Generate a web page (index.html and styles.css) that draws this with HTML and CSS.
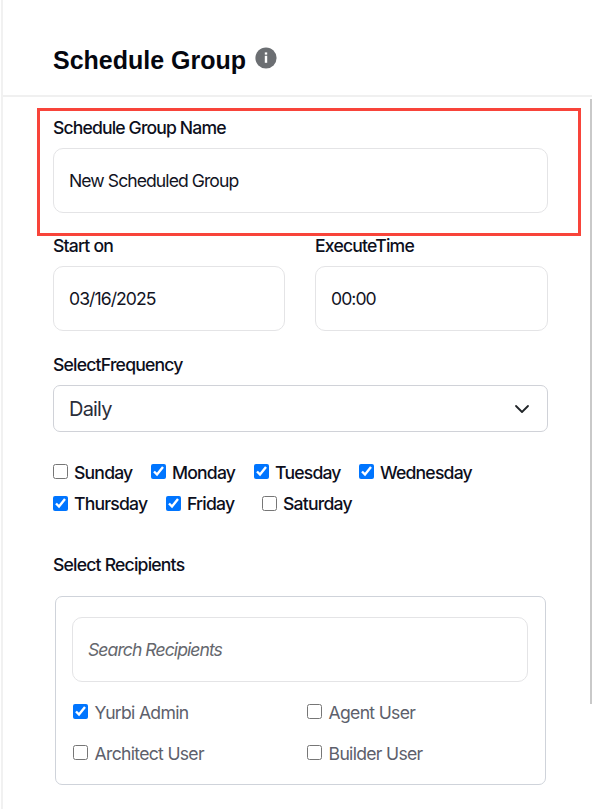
FILE: index.html
```html
<!DOCTYPE html>
<html lang="en">
<head>
  <meta charset="UTF-8">
  <title>Schedule Group</title>
  <link rel="stylesheet" href="styles.css">
</head>
<body>
  <div class="panel">
    <header class="panel-header">
      <h1>Schedule Group</h1>
      <svg class="info-icon" viewBox="0 0 22 22">
        <circle cx="11" cy="11" r="10.6" fill="#6b6e72"/>
        <rect x="9.8" y="5.4" width="2.4" height="2.2" fill="#fff"/>
        <rect x="9.8" y="8.8" width="2.4" height="7" fill="#fff"/>
      </svg>
    </header>

    <form class="panel-body">
      <div class="field name-field">
        <label for="groupName">Schedule Group Name</label>
        <input class="text-input" id="groupName" type="text" value="New Scheduled Group">
        <div class="highlight"></div>
      </div>

      <div class="field-row">
        <div class="field">
          <label for="startOn">Start on</label>
          <input class="text-input" id="startOn" type="text" value="03/16/2025">
        </div>
        <div class="field">
          <label for="executeTime">ExecuteTime</label>
          <input class="text-input" id="executeTime" type="text" value="00:00">
        </div>
      </div>

      <div class="field frequency-field">
        <label>SelectFrequency</label>
        <div class="select">
          <span>Daily</span>
          <svg class="chevron" viewBox="0 0 16 16">
            <path d="M2 5l6 6 6-6" fill="none" stroke="#212529" stroke-width="1.8" stroke-linecap="round" stroke-linejoin="round"/>
          </svg>
        </div>
      </div>

      <div class="days">
        <div class="day-row">
          <label class="check sunday"><input type="checkbox"><span>Sunday</span></label>
          <label class="check monday"><input type="checkbox" checked><span>Monday</span></label>
          <label class="check tuesday"><input type="checkbox" checked><span>Tuesday</span></label>
          <label class="check"><input type="checkbox" checked><span>Wednesday</span></label>
        </div>
        <div class="day-row">
          <label class="check thursday"><input type="checkbox" checked><span>Thursday</span></label>
          <label class="check friday"><input type="checkbox" checked><span>Friday</span></label>
          <label class="check"><input type="checkbox"><span>Saturday</span></label>
        </div>
      </div>

      <div class="field">
        <label for="search">Select Recipients</label>
        <div class="recipients">
          <input class="text-input search" id="search" type="text" placeholder="Search Recipients">
          <div class="recipient-list">
            <label class="check"><input type="checkbox" checked><span>Yurbi Admin</span></label>
            <label class="check"><input type="checkbox"><span>Agent User</span></label>
            <label class="check"><input type="checkbox"><span>Architect User</span></label>
            <label class="check"><input type="checkbox"><span>Builder User</span></label>
          </div>
        </div>
      </div>
      <div class="scroll-thumb"></div>
    </form>
  </div>
</body>
</html>
```

FILE: styles.css
```css
* {
  box-sizing: border-box;
}
body {
  margin: 0;
  background: #fff;
  color: #0d0f1c;
  font-family: Inter, "Liberation Sans", sans-serif;
  font-size: 17.6px;
  letter-spacing: -0.8px;
}
.panel {
  height: 809px;
  margin-left: 1px;
  border-left: 2px solid #f1f1f1;
  overflow: hidden;
}
.panel-header {
  display: flex;
  align-items: flex-start;
  height: 97px;
  padding: 45px 0 0 50px;
  border-bottom: 2px solid #f0f0f0;
}
h1 {
  margin: 0;
  color: #05070f;
  font: bold 25px/30px "Liberation Sans", sans-serif;
  letter-spacing: 0;
}
.info-icon {
  width: 22px;
  height: 22px;
  margin: 2px 0 0 9px;
}
.panel-body {
  position: relative;
  height: 712px;
  padding: 20px 44px 0 50px;
}
.field > label {
  display: block;
  height: 22px;
  line-height: 22px;
  font-weight: 500;
}
.name-field {
  position: relative;
  margin-bottom: 22px;
}
.name-field > label {
  letter-spacing: -0.86px;
}
.text-input {
  display: block;
  width: 100%;
  height: 65px;
  margin-top: 9px;
  padding: 0 15px;
  border: 1px solid #e4e4e6;
  border-radius: 10px;
  background: #fff;
  color: #12141f;
  font: inherit;
  letter-spacing: -0.94px;
}
/* red callout around the group name */
.highlight {
  position: absolute;
  top: -9px;
  left: -16px;
  width: 544px;
  height: 128px;
  border: 3px solid #f8443a;
}
.field-row {
  display: grid;
  grid-template-columns: 232px 233px;
  gap: 30px;
}
.frequency-field {
  margin-top: 23px;
}
.select {
  display: flex;
  align-items: center;
  justify-content: space-between;
  height: 47px;
  margin-top: 9px;
  padding: 0 17px 0 15px;
  border: 1px solid #d0d2d8;
  border-radius: 7px;
  color: #2b2e3a;
  font-size: 20px;
}
.chevron {
  width: 16px;
  height: 16px;
}
.days {
  margin: 25px 0 35px;
  font-weight: 500;
}
.day-row {
  display: flex;
  height: 31px;
}
.check {
  display: flex;
  align-items: center;
  height: 31px;
}
.check input {
  width: 15px;
  height: 15px;
  margin: 0 6px 2px 0;
}
.day-row + .day-row input {
  margin-bottom: 0;
}
.sunday {
  width: 98px;
}
.monday {
  width: 103px;
}
.tuesday {
  width: 105px;
}
.thursday {
  width: 113px;
}
.friday {
  width: 96px;
}
.recipients {
  height: 189px;
  margin: 20px 2px 0;
  padding: 20px 17px 0 16px;
  border: 1px solid #cfd3da;
  border-radius: 7px;
}
.search {
  margin-top: 0;
}
.search::placeholder {
  color: #65676d;
  font-style: italic;
  opacity: 1;
}
.recipient-list {
  display: grid;
  grid-template-columns: 234px 1fr;
  row-gap: 10px;
  padding: 15px 0 0 0.6px;
  color: #5d606b;
  letter-spacing: -0.7px;
}
.recipient-list input {
  margin-right: 7px;
}
.scroll-thumb {
  position: absolute;
  top: 2px;
  right: 0;
  width: 2px;
  height: 605px;
  background: #c9c9c9;
}
```
